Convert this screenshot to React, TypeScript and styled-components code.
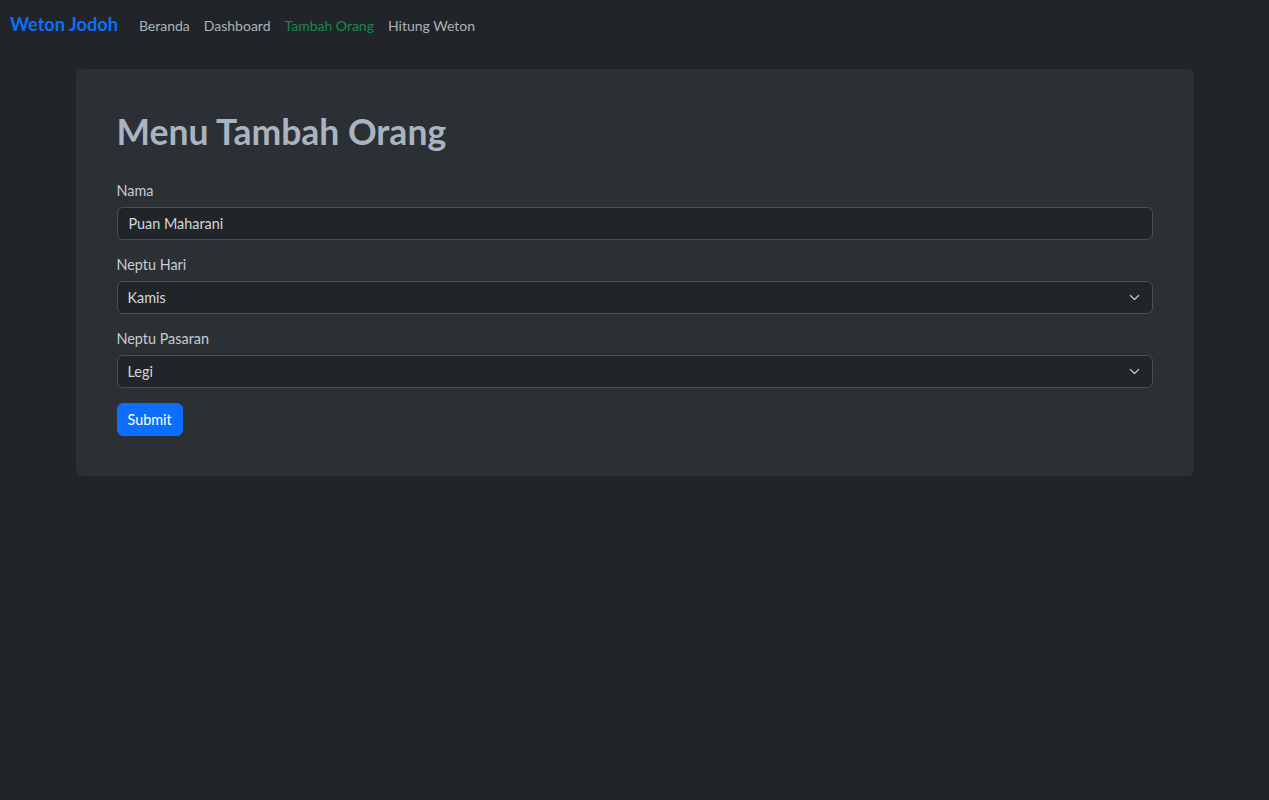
import React, { useState } from 'react';
import styled, { createGlobalStyle } from 'styled-components';

const GlobalStyle = createGlobalStyle`
  html, body {
    margin: 0;
    padding: 0;
    background: #212529;
    color: #dee2e6;
    font-family: Lato, "Open Sans", sans-serif;
    font-size: 14.4px;
    line-height: 1.5;
  }
  * {
    box-sizing: border-box;
  }
`;

const Page = styled.div`
  min-height: 800px;
  background: #212529;
`;

const Navbar = styled.nav`
  display: flex;
  align-items: center;
  height: 50px;
  padding: 0 10px;
`;

const Brand = styled.a`
  font-size: 18.2px;
  font-weight: 700;
  color: #0d6efd;
  text-decoration: none;
  margin-right: 14px;
`;

const NavList = styled.div`
  display: flex;
  align-items: center;
`;

const NavLink = styled.a<{ $active?: boolean }>`
  padding: 0 7px;
  font-size: 14px;
  color: ${props => (props.$active ? '#198754' : 'rgba(222, 226, 230, 0.75)')};
  text-decoration: none;
  cursor: pointer;
`;

const Container = styled.main`
  max-width: 1118px;
  margin: 19px auto 0;
`;

const Card = styled.div`
  background: #2b3035;
  border-radius: 6px;
  padding: 42px 41px 40px;
`;

const Title = styled.h1`
  margin: 0 0 27px 0;
  font-size: 35.5px;
  font-weight: 700;
  line-height: 1.2;
  color: #a9b4c0;
`;

const Form = styled.form`
  display: flex;
  flex-direction: column;
`;

const Field = styled.div`
  display: flex;
  flex-direction: column;
  margin-bottom: 15px;
`;

const Label = styled.label`
  color: #c8ccd0;
  margin-bottom: 6px;
  line-height: 20px;
`;

const Input = styled.input`
  height: 33px;
  padding: 0 11px;
  background: #212529;
  border: 1px solid #495057;
  border-radius: 6px;
  color: #d3d7db;
  font-family: inherit;
  font-size: 14.4px;
  outline: none;
`;

const SelectWrap = styled.div`
  position: relative;
  display: flex;
`;

const Select = styled.select`
  flex: 1;
  height: 33px;
  padding: 0 36px 0 10px;
  background: #212529;
  border: 1px solid #495057;
  border-radius: 6px;
  color: #d3d7db;
  font-family: inherit;
  font-size: 14.4px;
  appearance: none;
  outline: none;
`;

const Chevron = styled.svg`
  position: absolute;
  right: 13px;
  top: 11px;
  pointer-events: none;
`;

const SubmitButton = styled.button`
  align-self: flex-start;
  height: 33px;
  padding: 0 10px;
  background: #0d6efd;
  border: 1px solid #0d6efd;
  border-radius: 6px;
  color: #fff;
  font-family: inherit;
  font-size: 14.4px;
  cursor: pointer;
`;

const hariOptions = ['Minggu', 'Senin', 'Selasa', 'Rabu', 'Kamis', 'Jumat', 'Sabtu'];
const pasaranOptions = ['Legi', 'Pahing', 'Pon', 'Wage', 'Kliwon'];

function ChevronDown() {
  return (
    <Chevron width="11" height="11" viewBox="0 0 16 16">
      <path
        d="m2 5 6 6 6-6"
        fill="none"
        stroke="#b8bdc2"
        strokeWidth="2"
        strokeLinecap="round"
        strokeLinejoin="round"
      />
    </Chevron>
  );
}

export default function App() {
  const [nama, setNama] = useState('Puan Maharani');
  const [hari, setHari] = useState('Kamis');
  const [pasaran, setPasaran] = useState('Legi');

  return (
    <Page>
      <GlobalStyle />
      <Navbar>
        <Brand href="#">Weton Jodoh</Brand>
        <NavList>
          <NavLink>Beranda</NavLink>
          <NavLink>Dashboard</NavLink>
          <NavLink $active>Tambah Orang</NavLink>
          <NavLink>Hitung Weton</NavLink>
        </NavList>
      </Navbar>

      <Container>
        <Card>
          <Title>Menu Tambah Orang</Title>
          <Form onSubmit={e => e.preventDefault()}>
            <Field>
              <Label htmlFor="nama">Nama</Label>
              <Input id="nama" value={nama} onChange={e => setNama(e.target.value)} />
            </Field>
            <Field>
              <Label htmlFor="hari">Neptu Hari</Label>
              <SelectWrap>
                <Select id="hari" value={hari} onChange={e => setHari(e.target.value)}>
                  {hariOptions.map(h => (
                    <option key={h}>{h}</option>
                  ))}
                </Select>
                <ChevronDown />
              </SelectWrap>
            </Field>
            <Field>
              <Label htmlFor="pasaran">Neptu Pasaran</Label>
              <SelectWrap>
                <Select id="pasaran" value={pasaran} onChange={e => setPasaran(e.target.value)}>
                  {pasaranOptions.map(p => (
                    <option key={p}>{p}</option>
                  ))}
                </Select>
                <ChevronDown />
              </SelectWrap>
            </Field>
            <SubmitButton type="submit">Submit</SubmitButton>
          </Form>
        </Card>
      </Container>
    </Page>
  );
}
